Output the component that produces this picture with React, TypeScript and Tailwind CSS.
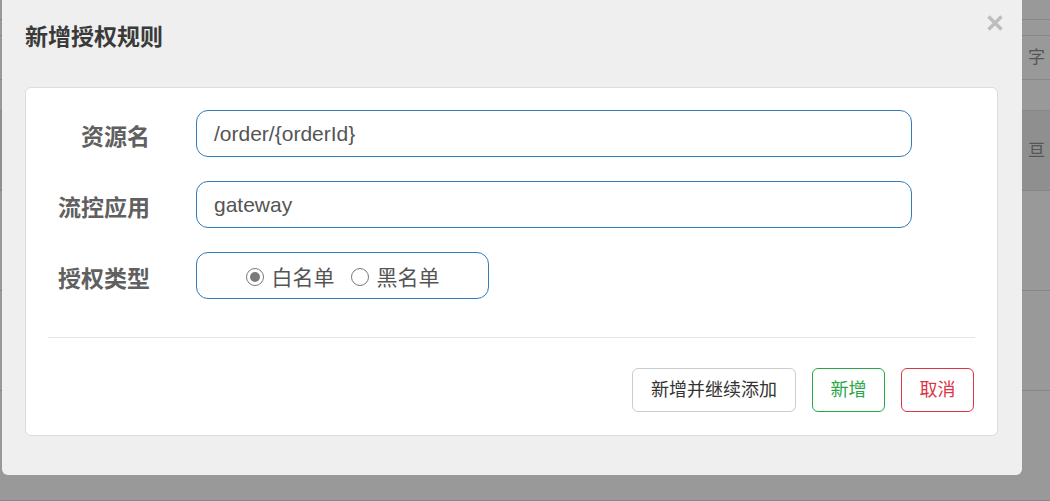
import React from "react";

const font = "font-['Liberation_Sans','Noto_Sans_CJK_SC',sans-serif]";

// rows of the page behind the overlay (only the right edge shows)
const bgRows = [
    { h: "h-[20px]", text: "", dark: false },
    { h: "h-[16px]", text: "", dark: false },
    { h: "h-[44px]", text: "字", dark: false },
    { h: "h-[31px]", text: "", dark: false },
    { h: "h-[80px]", text: "亘", dark: true },
    { h: "h-[100px]", text: "", dark: false },
    { h: "h-[100px]", text: "", dark: false },
    { h: "h-[110px]", text: "", dark: false },
];

function Radio({ checked, label }: { checked: boolean; label: string }) {
    return (
        <label className="flex items-center gap-[8px]">
            <span className="w-[18px] h-[18px] rounded-full border-[1.5px] border-[#7a7a7a] bg-white flex items-center justify-center">
                {checked && <span className="w-[10px] h-[10px] rounded-full bg-[#7a7a7a]" />}
            </span>
            <span className="text-[21px] leading-none text-[#555]">{label}</span>
        </label>
    );
}

function FormRow({ label, children }: { label: string; children: React.ReactNode }) {
    return (
        <div className="flex items-center">
            <div className="w-[124px] pt-[7px] text-right text-[23px] font-bold leading-none text-[#606060]">
                {label}
            </div>
            <div className="ml-[46px]">{children}</div>
        </div>
    );
}

export default function App() {
    return (
        <div className={`relative w-[1050px] h-[501px] overflow-hidden bg-[#999999] ${font}`}>
            {/* Page behind the backdrop */}
            <div className="flex flex-col">
                {bgRows.map((r, i) => (
                    <div
                        key={i}
                        className={`${r.h} border-b border-[#878787] flex items-center justify-end pr-[5px] ${r.dark ? "bg-[#8f8f8f]" : ""}`}
                    >
                        <span className="text-[17px] text-[#555] leading-none">{r.text}</span>
                    </div>
                ))}
            </div>

            {/* Modal */}
            <div className="absolute left-[2px] top-[-6px] w-[1020px] h-[481px] rounded-[6px] bg-[#efefef] flex flex-col px-[23px]">
                <div className="h-[93px] pt-[32px]">
                    <h4 className="text-[23px] font-bold leading-[23px] text-[#3a3a3a]">新增授权规则</h4>
                </div>
                <button className="absolute right-[19px] top-[21px] w-[16px] h-[16px]">
                    <svg viewBox="0 0 16 16" className="w-[16px] h-[16px]">
                        <path d="M1.5 1.5 L14.5 14.5 M14.5 1.5 L1.5 14.5" stroke="#bdbdbd" strokeWidth="3.4" />
                    </svg>
                </button>

                <div className="w-[973px] h-[349px] bg-white border border-[#dcdcdc] rounded-[6px] flex flex-col pt-[22px]">
                    <div className="flex flex-col gap-[24px]">
                        <FormRow label="资源名">
                            <div className="w-[716px] h-[47px] border border-[#337ab7] rounded-[12px] flex items-center pl-[17px] text-[21px] text-[#555]">
                                /order/{"{orderId}"}
                            </div>
                        </FormRow>
                        <FormRow label="流控应用">
                            <div className="w-[716px] h-[47px] border border-[#337ab7] rounded-[12px] flex items-center pl-[17px] text-[21px] text-[#555]">
                                gateway
                            </div>
                        </FormRow>
                        <FormRow label="授权类型">
                            <div className="w-[293px] h-[47px] border border-[#337ab7] rounded-[12px] flex items-center justify-center gap-[16px] pt-[3px]">
                                <Radio checked label="白名单" />
                                <Radio checked={false} label="黑名单" />
                            </div>
                        </FormRow>
                    </div>

                    <div className="mx-[22px] mt-[38px] h-px bg-[#e5e5e5]" />

                    <div className="flex justify-end gap-[16px] mt-[30px] mr-[23px]">
                        <button className="h-[44px] px-[18px] rounded-[6px] border border-[#cccccc] bg-white text-[18px] text-[#333]">
                            新增并继续添加
                        </button>
                        <button className="h-[44px] w-[73px] rounded-[6px] border border-[#28a745] bg-white text-[18px] text-[#28a745]">
                            新增
                        </button>
                        <button className="h-[44px] w-[73px] rounded-[6px] border border-[#dc3545] bg-white text-[18px] text-[#dc3545]">
                            取消
                        </button>
                    </div>
                </div>
            </div>
        </div>
    );
}
